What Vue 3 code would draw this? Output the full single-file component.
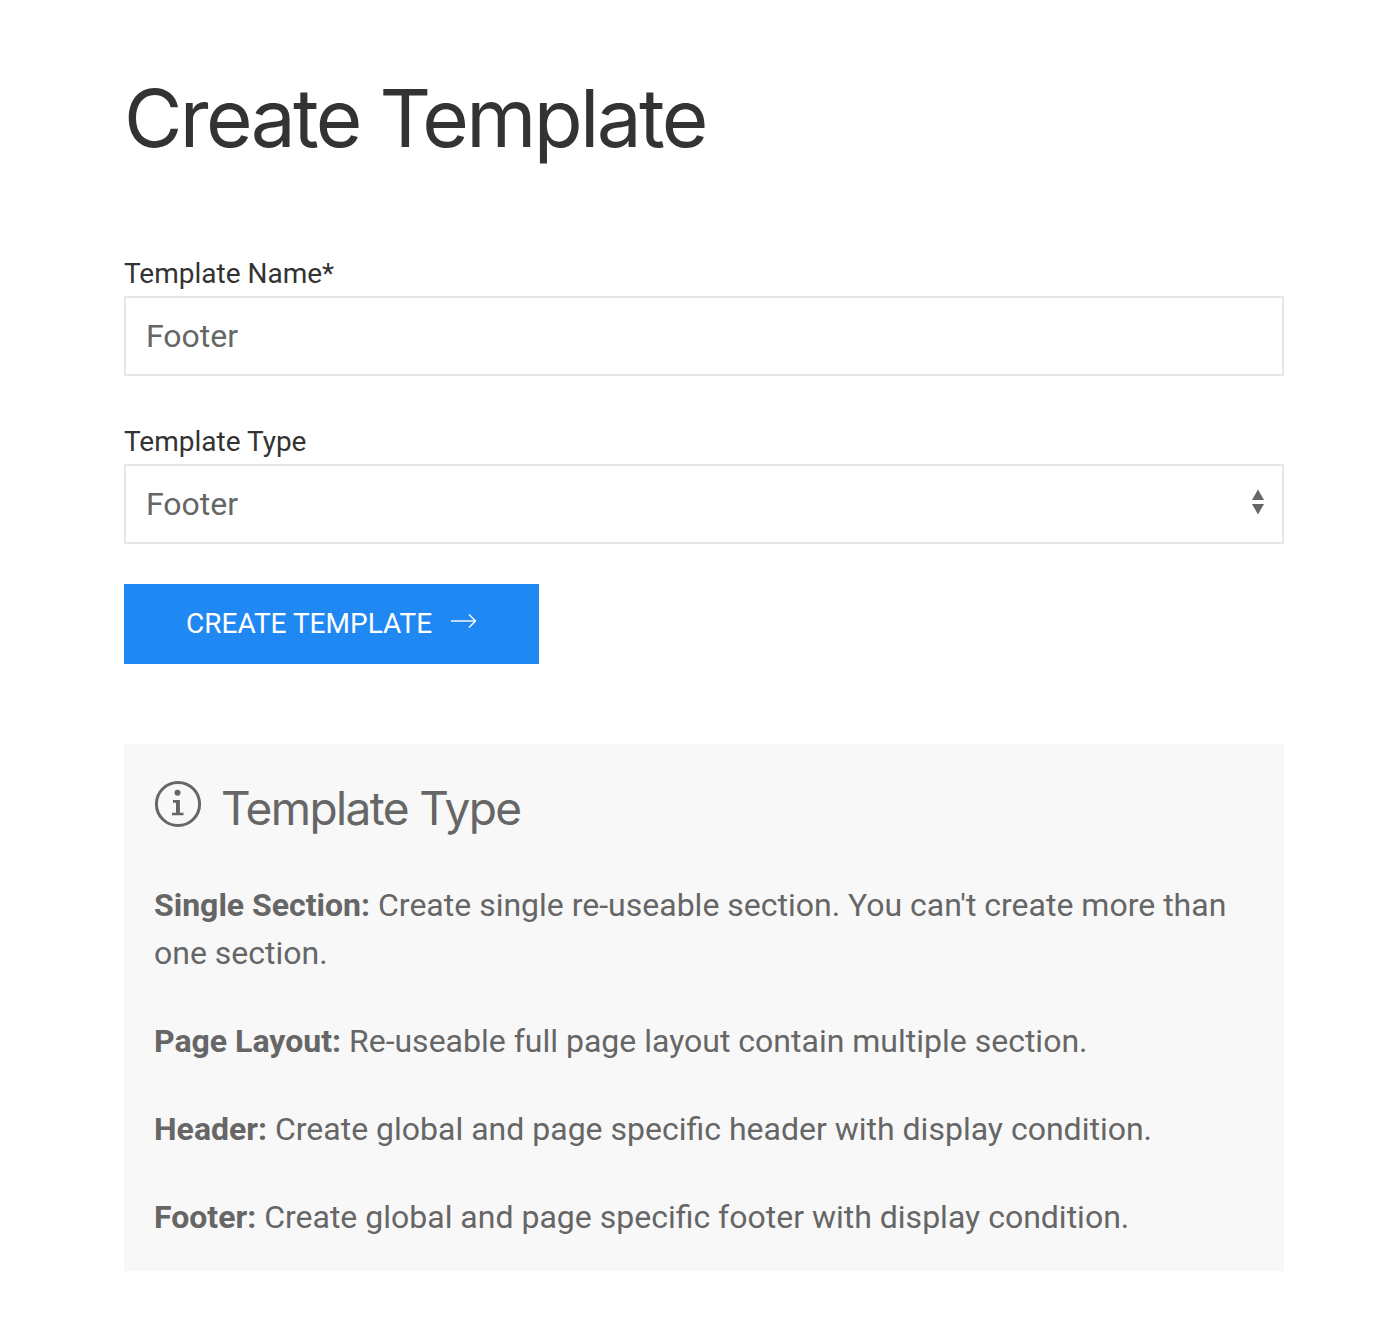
<template>
  <div class="page">
    <h1 class="title">Create Template</h1>

    <div class="field">
      <label class="field-label">Template Name*</label>
      <input class="control" type="text" value="Footer" />
    </div>

    <div class="field last">
      <label class="field-label">Template Type</label>
      <div class="select">
        <span>Footer</span>
        <svg class="updown" width="14" height="26" viewBox="0 0 14 26">
          <path d="M7 0.5 L13 11 L1 11 Z" fill="#666" />
          <path d="M7 25.5 L13 15 L1 15 Z" fill="#666" />
        </svg>
      </div>
    </div>

    <button class="btn" type="button">
      <span class="btn-text">CREATE TEMPLATE</span>
      <svg class="arrow" width="26" height="16" viewBox="0 0 26 16" fill="none" stroke="#fff" stroke-width="1.4">
        <path d="M0 8 H24.5" />
        <path d="M18 1.5 L24.5 8 L18 14.5" />
      </svg>
    </button>

    <section class="info">
      <div class="info-head">
        <svg class="info-icon" width="48" height="48" viewBox="0 0 48 48" fill="none">
          <circle cx="24" cy="24" r="21.6" stroke="#666" stroke-width="3" />
          <circle cx="23.5" cy="12.8" r="3" fill="#666" />
          <path d="M19 21.4 H24.5 V33 M18 34 H29.5" stroke="#666" stroke-width="2.6" />
          <path d="M22 21 H25.6 V34 H22 Z" fill="#666" />
        </svg>
        <h2 class="info-title">Template Type</h2>
      </div>
      <p v-for="item in types" :key="item.name" class="info-row">
        <strong>{{ item.name }}:</strong> {{ item.text }}
      </p>
    </section>
  </div>
</template>

<script setup>
const types = [
  { name: 'Single Section', text: "Create single re-useable section. You can't create more than one section." },
  { name: 'Page Layout', text: 'Re-useable full page layout contain multiple section.' },
  { name: 'Header', text: 'Create global and page specific header with display condition.' },
  { name: 'Footer', text: 'Create global and page specific footer with display condition.' }
]
</script>

<style>
html, body { background: #fff; }
</style>

<style scoped>
.page { width: 1160px; height: 1340px; box-sizing: border-box; margin-left: 124px; padding-top: 70px; font-family: Roboto, sans-serif; }
.title { margin: 0 0 92px; font-family: Inter, sans-serif; font-size: 80px; line-height: 96px; font-weight: 400; letter-spacing: -2.65px; color: #333; }

.field { margin-bottom: 50px; }
.field.last { margin-bottom: 40px; }
.field-label { display: block; font-size: 28px; line-height: 32px; color: #333; margin-bottom: 6px; }
.control, .select { display: flex; align-items: center; justify-content: space-between; width: 100%; height: 80px; box-sizing: border-box; padding: 0 17px 0 20px; border: 2px solid #e6e6e6; background: #fff; font-family: Roboto, sans-serif; font-size: 32px; color: #666; outline: none; }
.updown { margin-top: -4px; }

.btn { display: flex; align-items: center; gap: 19px; width: 415px; height: 80px; box-sizing: border-box; padding: 0 0 0 62px; border: 0; background: #2088f2; color: #fff; font-family: Roboto, sans-serif; font-size: 28px; font-weight: 450; letter-spacing: 0; }
.btn-text { margin-top: -2px; }
.arrow { margin-top: -6px; }

.info { margin-top: 80px; height: 527px; box-sizing: border-box; padding: 36px 30px 0; background: #f8f8f8; color: #666; }
.info-head { display: flex; align-items: center; gap: 19px; margin-bottom: 45px; }
.info-icon { margin-top: -8px; }
.info-title { margin: 0; font-family: Inter, sans-serif; font-size: 46px; line-height: 56px; font-weight: 400; letter-spacing: -1.6px; color: #666; }
.info-row { margin: 0 0 40px; font-size: 32px; line-height: 48px; }
.info-row strong { font-weight: 700; }
</style>
